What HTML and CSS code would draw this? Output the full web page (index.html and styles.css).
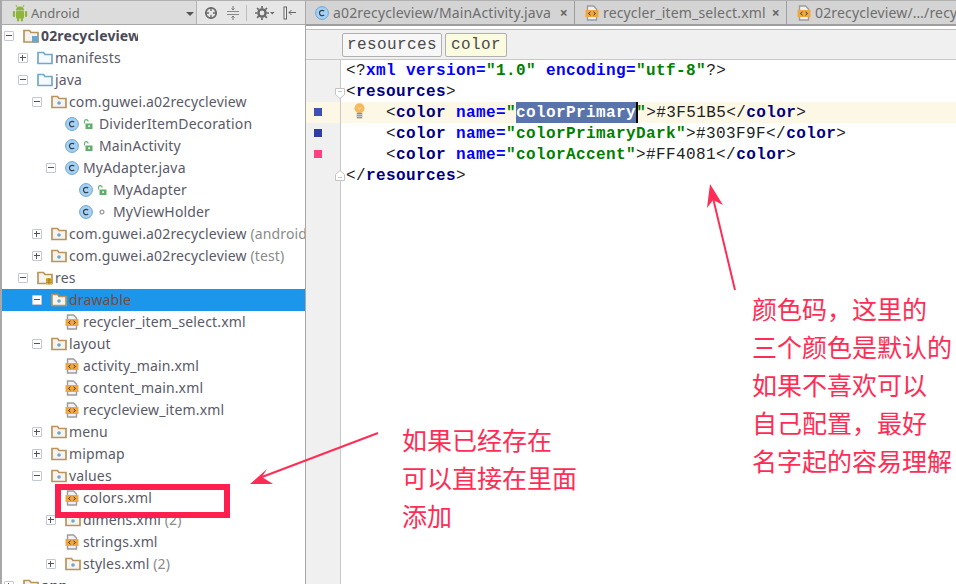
FILE: index.html
```html
<!DOCTYPE html>
<html lang="zh">
<head>
<meta charset="utf-8">
<title>colors.xml</title>
<link rel="stylesheet" href="styles.css">
</head>
<body>
<svg class="defs" width="0" height="0" aria-hidden="true">
  <symbol id="i-module" viewBox="0 0 16 16"><path d="M1 2.500h5.500l1.500 2h7v9.500h-14z" fill="#f6f3ee" stroke="#b9945f" stroke-width="1.700"/><rect x="9" y="8" width="6.500" height="6.500" fill="#6ea6c8"/></symbol>
  <symbol id="i-src" viewBox="0 0 16 16"><path d="M1 2.500h5.500l1.500 2h7v9h-14z" fill="#f7fafc" stroke="#72a8c9" stroke-width="1.700"/></symbol>
  <symbol id="i-pkg" viewBox="0 0 16 16"><path d="M1 2.500h5.500l1.500 2h7v9h-14z" fill="#f7f4ef" stroke="#b9945f" stroke-width="1.700"/><circle cx="8" cy="9" r="1.800" fill="#6ea6c8"/></symbol>
  <symbol id="i-res" viewBox="0 0 16 16"><path d="M1 2.500h5.500l1.500 2h7v9h-14z" fill="#f7f4ef" stroke="#b9945f" stroke-width="1.700"/><path d="M9 8h6v6.500h-6z" fill="#e8b53c"/><path d="M9 10h6M9 12.200h6M12 8v6.500" stroke="#8d6a1d" stroke-width=".7"/></symbol>
  <symbol id="i-class" viewBox="0 0 14 14"><circle cx="7" cy="7" r="6.400" fill="#a6d1f3" stroke="#69a5d6"/><path d="M9.200 5.200a2.700 2.700 0 1 0 0 3.600" fill="none" stroke="#34404c" stroke-width="1.200"/></symbol>
  <symbol id="i-lock" viewBox="0 0 10 10"><path d="M1.500 4.500v-2a1.800 1.800 0 0 1 3.600 0" fill="none" stroke="#6cb073" stroke-width="1.200"/><rect x="2.500" y="4.500" width="7" height="5.500" fill="#62ad6c"/><rect x="5.300" y="6.300" width="1.600" height="1.800" fill="#fff"/></symbol>
  <symbol id="i-dot" viewBox="0 0 10 10"><circle cx="5" cy="5" r="1.900" fill="none" stroke="#9a9a9a" stroke-width="1.300"/></symbol>
  <symbol id="i-xml" viewBox="0 0 14 16"><path d="M2.500 1h6l3 3v11h-9z" fill="#f2f2f2" stroke="#9c9c9c" stroke-width="1.400"/><rect x="0.500" y="5" width="13" height="7" fill="#eea83f"/><path d="M5.500 6.800l-2 1.700 2 1.700M8.500 6.800l2 1.700-2 1.700" fill="none" stroke="#3f3a2e" stroke-width="1"/></symbol>
  <symbol id="i-android" viewBox="0 0 16 18"><path d="M4 6.500a4 4 0 0 1 8 0z" fill="#8fb63a"/><path d="M5 3l-1-2M11 3l1-2" stroke="#8fb63a"/><rect x="4" y="7" width="8" height="7.500" rx="1" fill="#8fb63a"/><rect x="0.800" y="7" width="2.300" height="6" rx="1.100" fill="#8fb63a"/><rect x="12.900" y="7" width="2.300" height="6" rx="1.100" fill="#8fb63a"/><rect x="5" y="13" width="2.200" height="4.500" rx="1" fill="#8fb63a"/><rect x="8.800" y="13" width="2.200" height="4.500" rx="1" fill="#8fb63a"/></symbol>
</svg>

<div class="app">
  <aside class="sidebar">
    <div class="panel-head">
      <div class="view-select">
        <svg class="ic-android"><use href="#i-android"/></svg>
        <span class="view-name">Android</span>
        <span class="caret"></span>
      </div>
      <div class="tools">
        <svg class="tool" viewBox="0 0 14 14"><circle cx="7" cy="7" r="5.200" fill="none" stroke="#6a6a6a" stroke-width="1.700"/><path d="M7 1v4M7 9v4M1 7h4M9 7h4" stroke="#6a6a6a" stroke-width="1.300"/></svg>
        <svg class="tool narrow" viewBox="0 0 14 14"><path d="M1 5.500h12M1 8.500h12" stroke="#8a8a8a"/><path d="M7 0v3.500M5.500 2.500l1.500 1.500 1.500-1.500M7 14v-3.500M5.500 11.500l1.500-1.500 1.500 1.500" fill="none" stroke="#777"/></svg>
        <span class="tool-sep"></span>
        <svg class="tool gear" viewBox="0 0 20 14"><circle cx="7" cy="7" r="3.600" fill="none" stroke="#6a6a6a" stroke-width="2.400"/><path d="M7 0v14M0 7h14M2 2l10 10M12 2l-10 10" stroke="#6a6a6a" stroke-width="1.700" stroke-dasharray="2.400 9.200"/><path d="M15 6h4.500l-2.250 2.500z" fill="#6a6a6a"/></svg>
        <svg class="tool" viewBox="0 0 14 14"><rect x="1" y="1" width="2.500" height="12" fill="#f0f0f0" stroke="#666"/><path d="M6 6.500h7M8.500 4l-2.500 2.500 2.500 2.500" fill="none" stroke="#666"/></svg>
      </div>
    </div>
    <ul class="tree">
      <li class="row d0"><span class="tog minus"></span><svg class="ic"><use href="#i-module"/></svg><span class="lab root">02recycleview</span></li>
      <li class="row d1"><span class="tog plus"></span><svg class="ic"><use href="#i-src"/></svg><span class="lab">manifests</span></li>
      <li class="row d1"><span class="tog minus"></span><svg class="ic"><use href="#i-src"/></svg><span class="lab">java</span></li>
      <li class="row d2"><span class="tog minus"></span><svg class="ic"><use href="#i-pkg"/></svg><span class="lab">com.guwei.a02recycleview</span></li>
      <li class="row d3"><span class="tog none"></span><svg class="ic-c"><use href="#i-class"/></svg><svg class="ic-m"><use href="#i-lock"/></svg><span class="lab mod">DividerItemDecoration</span></li>
      <li class="row d3"><span class="tog none"></span><svg class="ic-c"><use href="#i-class"/></svg><svg class="ic-m"><use href="#i-lock"/></svg><span class="lab mod">MainActivity</span></li>
      <li class="row d3"><span class="tog minus"></span><svg class="ic-c"><use href="#i-class"/></svg><span class="lab file">MyAdapter.java</span></li>
      <li class="row d4"><span class="tog none"></span><svg class="ic-c"><use href="#i-class"/></svg><svg class="ic-m"><use href="#i-lock"/></svg><span class="lab mod">MyAdapter</span></li>
      <li class="row d4"><span class="tog none"></span><svg class="ic-c"><use href="#i-class"/></svg><svg class="ic-m"><use href="#i-dot"/></svg><span class="lab mod">MyViewHolder</span></li>
      <li class="row d2"><span class="tog plus"></span><svg class="ic"><use href="#i-pkg"/></svg><span class="lab">com.guwei.a02recycleview <em>(androidTest)</em></span></li>
      <li class="row d2"><span class="tog plus"></span><svg class="ic"><use href="#i-pkg"/></svg><span class="lab">com.guwei.a02recycleview <em>(test)</em></span></li>
      <li class="row d1"><span class="tog minus"></span><svg class="ic"><use href="#i-res"/></svg><span class="lab">res</span></li>
      <li class="row d2 selected"><span class="tog minus"></span><svg class="ic"><use href="#i-pkg"/></svg><span class="lab">drawable</span></li>
      <li class="row d3"><span class="tog none"></span><svg class="ic-x"><use href="#i-xml"/></svg><span class="lab file">recycler_item_select.xml</span></li>
      <li class="row d2"><span class="tog minus"></span><svg class="ic"><use href="#i-pkg"/></svg><span class="lab">layout</span></li>
      <li class="row d3"><span class="tog none"></span><svg class="ic-x"><use href="#i-xml"/></svg><span class="lab file">activity_main.xml</span></li>
      <li class="row d3"><span class="tog none"></span><svg class="ic-x"><use href="#i-xml"/></svg><span class="lab file">content_main.xml</span></li>
      <li class="row d3"><span class="tog none"></span><svg class="ic-x"><use href="#i-xml"/></svg><span class="lab file">recycleview_item.xml</span></li>
      <li class="row d2"><span class="tog plus"></span><svg class="ic"><use href="#i-pkg"/></svg><span class="lab">menu</span></li>
      <li class="row d2"><span class="tog plus"></span><svg class="ic"><use href="#i-pkg"/></svg><span class="lab">mipmap</span></li>
      <li class="row d2"><span class="tog minus"></span><svg class="ic"><use href="#i-pkg"/></svg><span class="lab">values</span></li>
      <li class="row d3"><span class="tog none"></span><svg class="ic-x"><use href="#i-xml"/></svg><span class="lab file">colors.xml</span></li>
      <li class="row d3"><span class="tog plus"></span><svg class="ic"><use href="#i-pkg"/></svg><span class="lab">dimens.xml <em>(2)</em></span></li>
      <li class="row d3"><span class="tog none"></span><svg class="ic-x"><use href="#i-xml"/></svg><span class="lab file">strings.xml</span></li>
      <li class="row d3"><span class="tog plus"></span><svg class="ic"><use href="#i-pkg"/></svg><span class="lab">styles.xml <em>(2)</em></span></li>
      <li class="row d0"><span class="tog plus"></span><svg class="ic"><use href="#i-module"/></svg><span class="lab root">app</span></li>
    </ul>
  </aside>

  <main class="editor">
    <div class="tabs">
      <div class="tab t1"><svg class="ic-c"><use href="#i-class"/></svg><span class="tab-name">a02recycleview/MainActivity.java</span><span class="close">×</span></div>
      <div class="tab t2"><svg class="ic-x"><use href="#i-xml"/></svg><span class="tab-name">recycler_item_select.xml</span><span class="close">×</span></div>
      <div class="tab t3"><svg class="ic-x"><use href="#i-xml"/></svg><span class="tab-name">02recycleview/…/recycleview_item.xml</span></div>
    </div>
    <div class="crumbs">
      <span class="crumb">resources</span>
      <span class="crumb current">color</span>
    </div>
    <div class="code">
      <div class="line"><div class="gutter"></div><pre class="src"><i>&lt;?</i><b class="at">xml</b> <b class="at">version=</b><b class="val">"1.0"</b> <b class="at">encoding=</b><b class="val">"utf-8"</b><i>?&gt;</i></pre></div>
      <div class="line"><div class="gutter"><svg class="fold" viewBox="0 0 10 11"><path d="M.5.500h9v6l-4.500 4-4.500-4z" fill="#fff" stroke="#c4c4c4"/><path d="M3 3.500h4" stroke="#c4c4c4"/></svg></div><pre class="src"><i>&lt;</i><b class="tag">resources</b><i>&gt;</i></pre></div>
      <div class="line hl"><div class="gutter"><span class="swatch s1"></span><svg class="bulb" viewBox="0 0 12 18"><circle cx="6" cy="6" r="5.500" fill="#f5b95f"/><path d="M4 5l2 2 2-2" fill="none" stroke="#fde4b0"/><rect x="3" y="11" width="6" height="6" fill="#8f8f8f"/><path d="M3 13h6M3 15h6" stroke="#d5d5d5"/></svg></div><pre class="src">    <i>&lt;</i><b class="tag">color</b> <b class="at">name=</b><b class="val">"<span class="sel">colorPrimary</span><span class="caret-line"></span>"</b><i>&gt;#3F51B5&lt;/</i><b class="tag">color</b><i>&gt;</i></pre></div>
      <div class="line"><div class="gutter"><span class="swatch s2"></span></div><pre class="src">    <i>&lt;</i><b class="tag">color</b> <b class="at">name=</b><b class="val">"colorPrimaryDark"</b><i>&gt;#303F9F&lt;/</i><b class="tag">color</b><i>&gt;</i></pre></div>
      <div class="line"><div class="gutter"><span class="swatch s3"></span></div><pre class="src">    <i>&lt;</i><b class="tag">color</b> <b class="at">name=</b><b class="val">"colorAccent"</b><i>&gt;#FF4081&lt;/</i><b class="tag">color</b><i>&gt;</i></pre></div>
      <div class="line"><div class="gutter"><svg class="fold end" viewBox="0 0 10 11"><path d="M.5 10.500h9v-6l-4.500-4-4.500 4z" fill="#fff" stroke="#c4c4c4"/><path d="M3 7.500h4" stroke="#c4c4c4"/></svg></div><pre class="src"><i>&lt;/</i><b class="tag">resources</b><i>&gt;</i></pre></div>
      <div class="gutter-rest"></div>
    </div>
  </main>

  <div class="red-box"></div>
  <svg class="arrows" viewBox="0 0 956 584">
    <path d="M735 290L713 198" stroke="#ff2d55" stroke-width="2" fill="none"/>
    <path d="M710 184L723 205L713 200L707 208z" fill="#ff2d55"/>
    <path d="M378 433L262 477" stroke="#ff2d55" stroke-width="2" fill="none"/>
    <path d="M250 484L267 469L262 477L273 484z" fill="#ff2d55"/>
  </svg>
  <p class="note note-right">颜色码，这里的<br>三个颜色是默认的<br>如果不喜欢可以<br>自己配置，最好<br>名字起的容易理解</p>
  <p class="note note-left">如果已经存在<br>可以直接在里面<br>添加</p>
</div>
</body>
</html>
```
FILE: styles.css
```css
* { box-sizing: border-box; }
html, body { margin: 0; padding: 0; background: #fff; }
.defs { position: absolute; }
.app {
  position: relative;
  display: flex;
  width: 956px;
  height: 584px;
  overflow: hidden;
  font-family: "Noto Sans", "Open Sans", sans-serif;
  font-size: 14px;
  letter-spacing: .15px;
  color: #5a5a68;
}

/* project panel */
.sidebar {
  width: 306px;
  flex: none;
  display: flex;
  flex-direction: column;
  border-left: 2px solid #a8a8a8;
  border-right: 1px solid #a8a8a8;
  background: #fff;
  overflow: hidden;
}
.panel-head {
  height: 25px;
  flex: none;
  display: flex;
  background: #e6e6e6;
  border-top: 1px solid #b0b0b0;
  border-bottom: 1px solid #a8a8a8;
}
.view-select {
  width: 198px;
  display: flex;
  align-items: center;
  padding-left: 10px;
  background: #dcdcdc;
  border-right: 1px solid #b4b4b4;
}
.ic-android { width: 16px; height: 18px; flex: none; }
.view-name { margin-left: 3px; font-size: 13px; letter-spacing: 0; color: #6e6e6e; }
.caret {
  margin-left: auto;
  margin-right: 2px;
  margin-top: 2px;
  border-left: 4px solid transparent;
  border-right: 4px solid transparent;
  border-top: 4px solid #555;
}
.tools { display: flex; align-items: center; padding-left: 7px; }
.tool { width: 14px; height: 14px; flex: none; margin-right: 8px; }
.tool.narrow { margin-right: 6px; }
.tool.gear { width: 20px; }
.tool-sep { width: 1px; height: 16px; background: #bdbdbd; margin-right: 8px; }

.tree { list-style: none; margin: 0; padding: 0; flex: 1; overflow: hidden; }
.row {
  height: 22px;
  display: flex;
  align-items: center;
  white-space: nowrap;
}
.d0 { padding-left: 2px; }
.d1 { padding-left: 16px; }
.d2 { padding-left: 30px; }
.d3 { padding-left: 44px; }
.d4 { padding-left: 58px; }
.selected { background: #1b96ea; color: #7a4a3a; }

.tog {
  position: relative;
  width: 10px;
  height: 10px;
  flex: none;
  margin-right: 9px;
  background: #fff;
  border: 1px solid #c3c8d6;
  border-radius: 1px;
}
.tog.none { visibility: hidden; }
.tog.minus::before, .tog.plus::before {
  content: "";
  position: absolute;
  left: 1px; right: 1px; top: 3px;
  height: 2px;
  background: linear-gradient(#555 50%, transparent 50%);
}
.tog.plus::after {
  content: "";
  position: absolute;
  top: 1px; bottom: 1px; left: 3px;
  width: 2px;
  background: linear-gradient(90deg, #555 50%, transparent 50%);
}
.ic { width: 16px; height: 16px; flex: none; margin-right: 2px; }
.ic-c { width: 14px; height: 14px; flex: none; margin-right: 4px; }
.ic-m { width: 10px; height: 10px; flex: none; margin-right: 6px; }
.ic-x { width: 14px; height: 16px; flex: none; margin-right: 4px; }
.lab { padding-bottom: 2px; }
.lab.root { font-weight: 700; color: #4a4a58; width: 97px; overflow: hidden; }
em { font-style: normal; color: #8a8a8a; }

/* editor */
.editor { flex: 1; min-width: 0; display: flex; flex-direction: column; background: #fff; }
.tabs {
  height: 26px;
  flex: none;
  display: flex;
  background: #d4d4d4;
  border-top: 1px solid #b0b0b0;
  border-bottom: 2px solid #9e9e9e;
  overflow: hidden;
}
.tab {
  flex: none;
  display: flex;
  align-items: center;
  padding-left: 9px;
  border-right: 1px solid #9e9e9e;
  color: #6e6e6e;
  white-space: nowrap;
}
.tab .ic-c, .tab .ic-x { margin-right: 4px; }
.t1 { width: 269px; }
.t2 { width: 212px; padding-left: 10px; }
.t3 { border-right: 0; padding-left: 10px; }
.close { margin-left: auto; margin-right: 6px; font-weight: 700; font-size: 14px; color: #666; }

.crumbs {
  flex: none;
  display: flex;
  align-items: flex-start;
  gap: 3px;
  margin-top: 3px;
  padding: 3px 0 0 36px;
  background: #f0f0f0;
  border-top: 1px solid #bdbdbd;
  border-bottom: 1px solid #c8c8c8;
  height: 31px;
}
.crumb {
  height: 24px;
  padding: 0 4px;
  border: 1px solid #b0b0b0;
  border-radius: 2px;
  background: #f7f7f7;
  font: 16px/22px "Liberation Mono", monospace;
  letter-spacing: .4px;
  color: #4a4a4a;
}
.crumb.current { background: #fbfbdf; padding: 0 5px; }

.code {
  flex: 1;
  display: flex;
  flex-direction: column;
  font: 16px/23px "Liberation Mono", monospace;
  letter-spacing: .4px;
  color: #222;
}
.line { height: 21px; flex: none; display: flex; }
.gutter {
  position: relative;
  width: 35px;
  flex: none;
  background: #f0f0f0;
  border-right: 1px solid #c8c8c8;
}
.gutter-rest { flex: 1; width: 35px; background: #f0f0f0; border-right: 1px solid #c8c8c8; }
.src { flex: 1; margin: 0; padding-left: 5px; font: inherit; letter-spacing: inherit; white-space: pre; }
.hl { background: #fdf8e6; }
.hl .gutter { background: #fdf8e6; }
.src i { font-style: normal; color: #222; }
.tag { color: #000080; }
.at { color: #0000ff; }
.val { color: #008000; }
.sel { background: #5a74ab; color: #fff; display: inline-block; height: 21px; }
.caret-line { display: inline-block; width: 2px; height: 21px; margin-right: -2px; background: #000; vertical-align: top; }

.swatch { position: absolute; left: 8px; top: 6px; width: 8px; height: 8px; }
.s1 { background: #3f51b5; }
.s2 { background: #303f9f; }
.s3 { background: #ff4081; }
.fold {
  position: absolute;
  right: -5px;
  top: 7px;
  width: 10px;
  height: 11px;
  z-index: 1;
}
.fold.end { top: 5px; }
.bulb { position: absolute; left: 48px; top: 0; width: 11px; height: 18px; }

/* annotations on top of the screenshot */
.red-box {
  position: absolute;
  left: 55px;
  top: 484px;
  width: 175px;
  height: 34px;
  border: 6px solid #ff1f4e;
}
.arrows { position: absolute; left: 0; top: 0; width: 956px; height: 584px; pointer-events: none; }
.note {
  position: absolute;
  margin: 0;
  font-family: "Noto Sans CJK SC", sans-serif;
  font-size: 25px;
  letter-spacing: 0;
  line-height: 38px;
  color: #ff2d55;
  white-space: nowrap;
}
.note-right { left: 752px; top: 289px; }
.note-left { left: 402px; top: 420px; }
```
